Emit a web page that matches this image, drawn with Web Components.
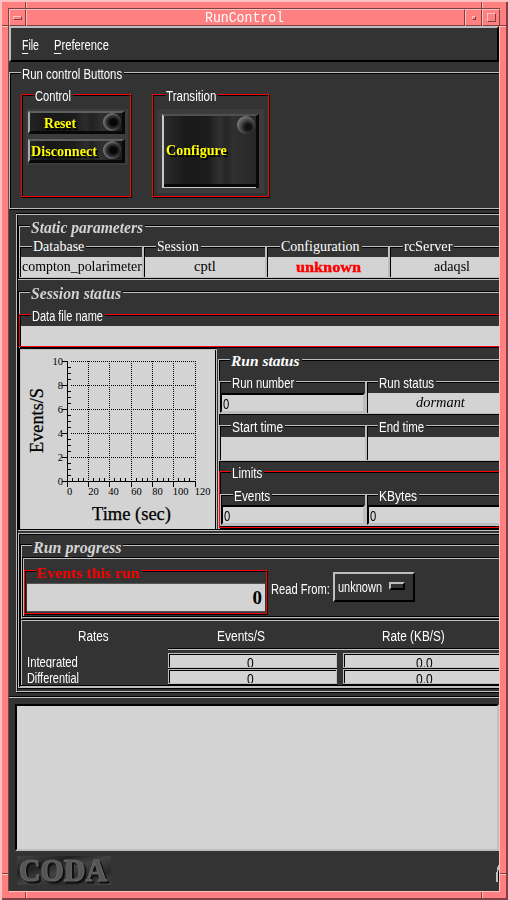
<!DOCTYPE html>
<html lang="en"><head><meta charset="utf-8"><title>RunControl</title>
<style>
html,body{margin:0;width:508px;height:900px;overflow:hidden;background:#ff8080}
body{font:15.5px/16px "Liberation Sans",sans-serif;color:#fff}
*{box-sizing:border-box}
.row{display:flex;align-items:flex-start}
.col{display:flex;flex-direction:column}
.frame{border:1px solid #bebebe;box-shadow:inset 1px 1px #000,1px 1px #000}
</style></head><body>
<motif-window>
 <menu-bar></menu-bar>
 <group-box label="Run control Buttons" lw="100" style="margin-top:10px;width:600px;height:137px;--ll:11px;--pt:21px">
  <div class="row">
   <group-box label="Control" lw="36" style="margin-left:11px;width:110px;height:103px;--c:#f00;--ll:12px;--pt:14px">
    <div class="col" style="width:102px;height:56px;margin-left:4px;background:#3c3c3c;padding:2px;gap:5px">
     <push-button w="32" style="--tx:14px;height:23px">Reset</push-button>
     <push-button w="66" style="--tx:1px;height:24px">Disconnect</push-button>
    </div>
   </group-box>
   <group-box label="Transition" lw="50" style="margin-left:21px;width:117px;height:103px;--c:#f00;--ll:12px;--pt:14px">
    <div class="col" style="width:107px;height:84px;margin-left:4px;background:#3c3c3c;padding:5px">
     <push-button big w="61" style="--tx:2px;height:74px">Configure</push-button>
    </div>
   </group-box>
  </div>
 </group-box>
 <div class="frame col" style="margin:5px 0 0 7px;width:600px;height:478px;flex:none;box-shadow:inset 1px 0 #000,0 -1px #000,1px 1px #000">
  <group-box inv label="Static parameters" lw="112" style="margin:10px 0 0 1px;width:600px;height:54px;--lf:italic bold 16px/16px 'Liberation Serif',serif;--lc:#d3d3d3;--ll:11px;--lt:-6px;--pt:20px">
   <div class="row">
    <value-box label="Database" lw="51" text="compton_polarimeter" tw="120" fh="20" style="--ll:12px"></value-box>
    <value-box label="Session" lw="42" text="cptl" tw="22" fh="20" style="width:123px;--ll:12px"></value-box>
    <value-box label="Configuration" lw="79" text="unknown" tw="65" alarm fh="20" style="width:123px;--ll:13px"></value-box>
    <value-box label="rcServer" lw="48" text="adaqsl" tw="36" fh="20" style="--ll:13px"></value-box>
   </div>
  </group-box>
  <group-box inv label="Session status" lw="90" style="margin:12px 0 0 1px;width:600px;height:239px;--lf:italic bold 16px/16px 'Liberation Serif',serif;--lc:#d3d3d3;--ll:11px;--lt:-6px;--pt:22px">
   <value-box sans label="Data file name" lw="71" fh="20" style="width:600px;height:33px;--c:#f00;--ll:11px"></value-box>
   <div class="row" style="margin-top:1px">
    <rate-plot></rate-plot>
    <group-box label="Run status" lw="69" style="margin:11px 0 0 1px;width:400px;height:170px;--lf:italic bold 15.5px/16px 'Liberation Serif',serif;--ll:11px;--lt:-7px;--pt:21px">
     <div class="row">
      <value-box sans label="Run number" lw="62" input text="0" tw="6" fh="20" style="width:147px;height:33px"></value-box>
      <value-box sans label="Run status" lw="55" text="dormant" tw="49" ital fh="20" style="width:147px;height:33px"></value-box>
     </div>
     <div class="row" style="margin-top:11px">
      <value-box sans label="Start time" lw="51" fh="23" style="width:147px;height:36px"></value-box>
      <value-box sans label="End time" lw="45" fh="23" style="width:147px;height:36px"></value-box>
     </div>
     <group-box label="Limits" lw="30" style="margin-top:10px;width:400px;height:57px;--c:#f00;--ll:11px;--pt:22px">
      <div class="row">
       <value-box sans label="Events" lw="36" input text="0" tw="6" fh="20" style="width:146px;height:32px;--ll:12px"></value-box>
       <value-box sans label="KBytes" lw="38" input text="0" tw="6" fh="20" style="width:147px;height:32px"></value-box>
      </div>
     </group-box>
    </group-box>
   </div>
  </group-box>
  <div class="frame col" style="margin:3px 0 0 1px;width:600px;height:155px">
   <group-box inv label="Run progress" lw="88" style="margin:10px 0 0 1px;width:600px;height:142px;--lf:italic bold 16px/16px 'Liberation Serif',serif;--lc:#d3d3d3;--ll:11px;--lt:-5px;--pt:12px">
    <div class="col" style="margin-left:1px;width:600px;height:60px;border:1px solid #000;box-shadow:inset 1px 1px #bebebe,0 1px #bebebe">
     <div class="row" style="margin:12px 0 0 1px">
      <group-box label="Events this run" lw="103" style="width:243px;height:44px;--c:#f00;--lc:#f00;--lf:bold 15.5px/16px 'Liberation Serif',serif;--ll:11px;--lt:-6px;--pt:12px">
       <div style="margin-left:2px;width:238px;height:29px;background:#d3d3d3;border-top:1px solid #555;border-bottom:1px solid #555;color:#000;font:bold 19px/27px 'Liberation Serif',serif;text-align:right;padding-right:3px">0</div>
      </group-box>
      <fit-text w="59" style="margin:11px 0 0 4px">Read From:</fit-text>
      <option-menu></option-menu>
     </div>
    </div>
    <rates-table></rates-table>
   </group-box>
  </div>
 </div>
 <div style="flex:none;height:2px;margin-top:4px;border-top:1px solid #000;border-bottom:1px solid #bebebe"></div>
 <div style="flex:none;margin:6px 0 0 6px;width:484px;height:147px;background:#d3d3d3;border:2px solid #bebebe;border-top-color:#000;border-left-color:#000"></div>
 <app-footer></app-footer>
</motif-window>
<script>
const def=(name,html,init)=>customElements.define(name,class extends HTMLElement{
  constructor(){super();this.attachShadow({mode:'open'});}
  connectedCallback(){
    this.shadowRoot.innerHTML='<style>*{box-sizing:border-box}</style>'+(typeof html==='function'?html(this):html);
    if(init)init(this);
  }});

/* Text condensed horizontally to a set width */
def('fit-text','<style>:host{display:block;flex:none;white-space:nowrap;height:16px}span{display:inline-block;transform-origin:0 0}</style><span><slot></slot></span>',el=>{
  const w=+el.getAttribute('w'),s=el.shadowRoot.querySelector('span');
  el.style.width=w+'px';
  s.style.transform='scaleX('+w/(s.offsetWidth||w)+')';
});

def('motif-window',`<style>
:host{display:grid;position:relative;width:508px;height:900px;padding:8px;background:#ff8080;border:0;grid-template:17px 866px/1fr;
 box-shadow:inset 2px 2px #ffc0c0,inset -2px -2px #804040}
.bar{display:flex;height:18px;width:492px;border-top:1px solid #804040;border-left:1px solid #804040;font:14px/16px "Liberation Mono",monospace}
.cell{height:17px;border:1px solid #804040;border-top-color:#ffc0c0;border-left-color:#ffc0c0;display:grid;place-items:center}
.i{border:1px solid #804040;border-top-color:#ffc0c0;border-left-color:#ffc0c0}
.client{margin-top:1px;border-left:1px solid #804040;border-right:1px solid #ffc0c0;border-bottom:1px solid #ffc0c0;width:492px;height:866px;background:#333;overflow:hidden;display:flex;flex-direction:column}
svg{position:absolute;left:0;top:0}
</style><div class="bar"><div class="cell" style="width:17px"><div class="i" style="width:9px;height:4px"></div></div>
<div class="cell" style="width:439px;padding-right:2px"><fit-text w="79">RunControl</fit-text></div>
<div class="cell" style="width:17px"><div class="i" style="width:4px;height:4px"></div></div>
<div class="cell" style="width:18px"><div class="i" style="width:9px;height:9px"></div></div></div>
<div class="client"><slot></slot></div>
<svg width="508" height="900" shape-rendering="crispEdges" fill="none"><path stroke="#804040" d="M25.5 2V8M481.5 2V8M2 25.5H8M500 25.5H506M2 873.5H8M500 873.5H506M25.5 892V898M481.5 892V898"/><path stroke="#ffc0c0" d="M26.5 2V8M482.5 2V8M2 26.5H8M500 26.5H506M2 874.5H8M500 874.5H506M26.5 892V898M482.5 892V898"/></svg>`);

def('menu-bar',`<style>:host{display:flex;flex:none;height:36px;border:2px solid #000;border-top-color:#bebebe;border-left-color:#bebebe;padding:9px 0 0 11px;gap:15px}
u{text-decoration:none;border-bottom:1px solid #fff;display:inline-block;height:17px}</style>
<fit-text w="17"><u>F</u>ile</fit-text><fit-text w="55"><u>P</u>reference</fit-text>`);

const legend=`.l{display:block;width:fit-content;height:16px;margin:var(--lt,-7px) 0 calc(-16px - var(--lt,-7px)) var(--ll,11px);padding:0 2px 0 1px;background:#333;font:var(--lf);color:var(--lc,#fff);position:relative;flex:none}`;
def('group-box',el=>`<style>:host{display:flex;flex:none;flex-direction:column;border:1px solid var(--c,#bebebe);box-shadow:inset 1px 1px #000,1px 1px #000}
:host([inv]){border-color:#000;box-shadow:inset 1px 1px #bebebe,0 1px #bebebe}
${legend}.b{--c:initial;--lf:initial;--lc:initial;--ll:initial;--lt:initial;--pt:initial}</style>
<div class="l"><fit-text w="${el.getAttribute('lw')}">${el.getAttribute('label')}</fit-text></div><div class="b"><slot></slot></div>`,
 el=>{el.shadowRoot.querySelector('.b').style.paddingTop=el.style.getPropertyValue('--pt');});

def('value-box',el=>{
 const t=el.getAttribute('text');
 return `<style>:host{display:flex;flex:none;flex-direction:column;width:124px;height:32px;border:1px solid var(--c,#bebebe);box-shadow:inset 1px 1px #000,1px 1px #000;--lt:-8px;--lf:14px/16px "Liberation Serif",serif;--ll:11px;--lc:#fff}
 :host([sans]){--lt:-7px;--lf:15.5px/16px "Liberation Sans",sans-serif}
 ${legend}
 .f{margin:auto 0 0 1px;height:${el.getAttribute('fh')}px;background:#d3d3d3;color:#000;display:flex;justify-content:center;flex:none;padding-top:1px;font:14.5px/16px "Liberation Serif",serif}
 :host([ital]) .f{font-style:italic;font-size:15px}
 :host([alarm]) .f{color:#f00;font-weight:bold;font-size:15px;padding-top:2px;-webkit-text-stroke:.4px #f00}
 :host([input]) .f{justify-content:flex-start;margin-left:0;border:2px solid #bebebe;border-top-color:#000;border-left-color:#000;padding:1px 0 0 1px;font:15px/16px "Liberation Sans",sans-serif}
 </style><div class="l"><fit-text w="${el.getAttribute('lw')}">${el.getAttribute('label')}</fit-text></div><div class="f">${t?`<fit-text w="${el.getAttribute('tw')}">${t}</fit-text>`:''}</div>`;});

def('push-button',el=>`<style>:host{display:flex;align-items:center;flex:none;width:97px;border:2px solid #080808;border-top-color:#606060;border-left-color:#a8a8a8;border-right-width:3px;border-bottom-width:3px;
 background:linear-gradient(90deg,#242424,#171717 20%,#1c1c1c 48%,#2c2c2c 60%,#222 68%,#303030 78%,#1b1b1b);position:relative}
 :host([big]){border-top-color:#505050;border-bottom:0;box-shadow:inset 0 -1px #c8c8c8,inset 0 -4px #080808;border-left-color:#c8c8c8;background:linear-gradient(90deg,#2b2b2b,#191919 25%,#1c1c1c 48%,#303030 60%,#262626 68%,#303030 75%,#282828)}
 fit-text{margin-left:var(--tx);font:bold 15px/16px "Liberation Serif",serif;color:#ff0;text-shadow:2px 2px #000;margin-top:1px}
 :host([big]) fit-text{margin-top:-4px}
 i{position:absolute;right:1px;top:0;width:18px;height:18px;border-radius:50%;background:radial-gradient(ellipse at 58% 52%,#060606 0 22%,#333 48%,#777 68%,#333)}
 :host([big]) i{right:1px;top:0;width:18px;height:18px;background:radial-gradient(circle at 62% 62%,#111 0 18%,#444 45%,#888 80%,#333)}
 </style><fit-text w="${el.getAttribute('w')}"><slot></slot></fit-text><i></i>`);

def('option-menu',`<style>:host{display:flex;flex:none;align-items:center;margin:2px 0 0 3px;width:82px;height:30px;border:2px solid #000;border-top-color:#bebebe;border-left-color:#bebebe;padding-left:3px;gap:7px}
i{width:16px;height:8px;border:2px solid #000;border-top-color:#bebebe;border-left-color:#bebebe;margin-top:-2px}</style><fit-text w="44">unknown</fit-text><i></i>`);

def('rate-plot',()=>{
 let d='M67.5 361V487M62 481.5H196';let g='',t='';
 const Y=i=>481.5-i*24,X=i=>67.5+[0,21,42,64,85,106,128][i];
 for(let i=0;i<6;i++){d+=`M62 ${Y(i)}H68`;t+=`<text x="63" y="${Y(i)+3}" text-anchor="end">${i*2}</text>`;if(i)g+=`M71 ${Y(i)}H196`;
  if(i<5)for(let j=1;j<4;j++)d+=`M67 ${Y(i)-j*6}H71`;}
 for(let i=0;i<7;i++){d+=`M${X(i)} 481V487`;t+=`<text x="${X(i)+[2,5,4,5,5,7,7][i]}" y="495" text-anchor="middle">${i*20}</text>`;if(i)g+=`M${X(i)} 361V481`;
  if(i<6)for(let j=1;j<4;j++)d+=`M${Math.floor(X(i)+j*5.33)+.5} 478V482`;}
 return `<style>:host{display:block;flex:none;width:198px;height:182px;background:#d3d3d3;border:1px solid #000;border-right:0;box-shadow:inset 1px 1px #bebebe,inset -1px 0 #bebebe,inset -2px 0 #000}svg{display:block}text{font-family:"Liberation Serif",serif}</style>
 <svg width="197" height="180" viewBox="20 349 197 180"><path d="${d}" stroke="#000" fill="none" shape-rendering="crispEdges"/><path d="${g}" stroke="#000" stroke-dasharray="1 1" fill="none" shape-rendering="crispEdges"/>
 <g font-size="10.5">${t}</g><g font-size="18" stroke="#000" stroke-width=".25"><text x="92" y="520" textLength="79" lengthAdjust="spacingAndGlyphs">Time (sec)</text><text transform="translate(43 453) rotate(-90)" textLength="65" lengthAdjust="spacingAndGlyphs">Events/S</text></g></svg>`;});

def('rates-table',()=>{
 const r=(n,w,a,b)=>`<div class="r"><div class="n"><fit-text w="${w}">${n}</fit-text></div><div class="c" style="width:169px;padding-right:4px"><fit-text w="7">${a}</fit-text></div><div class="c" style="width:169px;padding-right:7px"><fit-text w="17">${b}</fit-text></div></div>`;
 return `<style>:host{display:block;width:600px;margin-top:2px;height:67px;border-top:1px solid #000;box-shadow:inset 0 1px #bebebe}
 .h{display:flex;height:28px;padding:8px 0 0 57px}
 .h fit-text+fit-text{margin-left:108px}.h fit-text+fit-text+fit-text{margin-left:117px}
 .k{height:2px;margin:0 0 3px 147px;border-top:1px solid #000;border-bottom:1px solid #bebebe}
 .r{display:flex;height:15px;margin-bottom:1px;gap:6px}.n{width:141px;padding:1px 0 0 6px;height:15px;overflow:hidden}.r+.r .n{height:17px}
 .c{height:15px;border:1px solid #bebebe;box-shadow:inset 1px 1px #000,0 1px #000;background:#d3d3d3;color:#000;display:flex;justify-content:center;overflow:hidden;padding-top:1px;flex:none}</style>
 <div class="h"><fit-text w="31">Rates</fit-text><fit-text w="48">Events/S</fit-text><fit-text w="63">Rate (KB/S)</fit-text></div><div class="k"></div>${r('Integrated',51,'0','0.0')}${r('Differential',52,'0','0.0')}`;});

def('app-footer',`<style>:host{display:flex;flex:none;justify-content:space-between;margin:5px 0 0 8px;height:30px}svg{display:block}text{font:bold 31px "Liberation Serif",serif;filter:drop-shadow(2px 2px 0 #101010)}</style>
<svg width="94" height="29"><defs><linearGradient id="g" x2="1" y2="1"><stop stop-color="#444"/><stop offset=".3" stop-color="#222"/><stop offset=".5" stop-color="#424242"/><stop offset=".75" stop-color="#282828"/><stop offset="1" stop-color="#484848"/></linearGradient></defs>
<rect width="94" height="29" fill="url(#g)"/><text x="2" y="25" fill="#555" stroke="#626262" stroke-width="1.2" stroke-linejoin="round" textLength="88" lengthAdjust="spacingAndGlyphs">CODA</text></svg>
<svg width="3" height="30" shape-rendering="crispEdges"><path d="M2 9h1v5h-1v12h-2V16h1v-5h1z" fill="#bebebe"/><path d="M2 16h1v9h-1z"/></svg>`);
</script></body></html>
